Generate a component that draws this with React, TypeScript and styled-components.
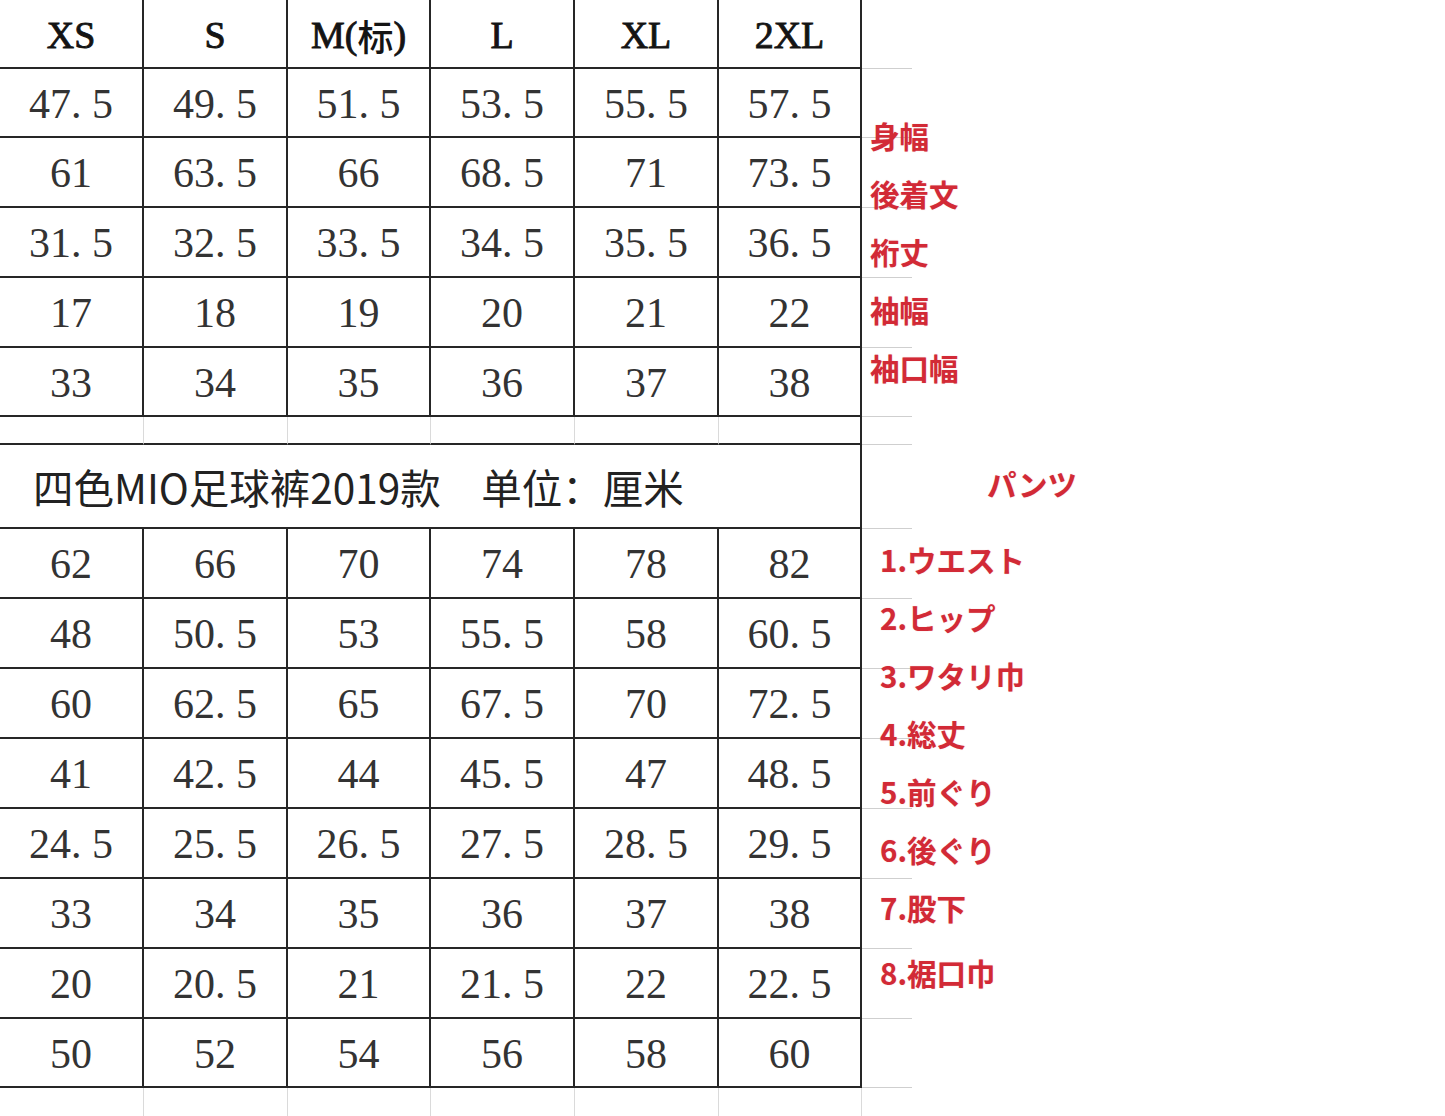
import styled, { createGlobalStyle } from 'styled-components';

const GlobalStyle = createGlobalStyle`
  html, body {
    margin: 0;
    padding: 0;
    background: #ffffff;
    overflow: hidden;
  }
`;

const LINE = '#262626';
const GHOST = '#cfcfcf';
const COLUMNS = '144px 144px 143px 144px 144px 143px 50px';
const SERIF = `'Liberation Serif', 'DejaVu Serif', 'Times New Roman', serif`;

// table + notes share one grid cell so the red notes sit over the sheet
const Page = styled.div`
  display: grid;
  width: 1445px;
  height: 1116px;
  overflow: hidden;

  & > * {
    grid-area: 1 / 1;
  }
`;

const Sheet = styled.div`
  display: flex;
  flex-direction: column;
`;

const Row = styled.div<{ $h: number }>`
  display: grid;
  grid-template-columns: ${COLUMNS};
  height: ${(p) => p.$h}px;
`;

const Cell = styled.div<{ $head?: boolean }>`
  box-sizing: border-box;
  display: flex;
  align-items: center;
  justify-content: center;
  border-right: 2px solid ${LINE};
  border-bottom: 2px solid ${LINE};
  font-family: ${SERIF};
  font-size: ${(p) => (p.$head ? '38px' : '42px')};
  font-weight: 400;
  -webkit-text-stroke: ${(p) => (p.$head ? '0.9px #141414' : '0')};
  color: ${(p) => (p.$head ? '#141414' : '#333333')};
  padding-top: 2px;
  white-space: nowrap;
`;

const HeadCjk = styled.span`
  font-family: 'Noto Sans CJK SC', sans-serif;
  font-weight: 500;
  -webkit-text-stroke: 0;
  font-size: 36px;
`;

const BlankCell = styled.div<{ $edge?: boolean; $open?: boolean }>`
  box-sizing: border-box;
  border-right: ${(p) => (p.$edge && !p.$open ? `2px solid ${LINE}` : `1px solid #dadada`)};
  border-bottom: ${(p) => (p.$open ? 'none' : `2px solid ${LINE}`)};
`;

const TitleCell = styled.div`
  grid-column: 1 / 7;
  box-sizing: border-box;
  display: flex;
  align-items: center;
  padding-left: 33px;
  border-right: 2px solid ${LINE};
  border-bottom: 2px solid ${LINE};
  font-family: 'Noto Sans CJK SC', sans-serif;
  font-size: 40.5px;
  font-weight: 400;
  color: #222222;
  white-space: pre;
`;

const GhostCell = styled.div<{ $open?: boolean }>`
  box-sizing: border-box;
  border-bottom: ${(p) => (p.$open ? 'none' : `1px solid ${GHOST}`)};
  margin-bottom: ${(p) => (p.$open ? 0 : 0.5)}px;
`;

const Notes = styled.div`
  display: flex;
  flex-direction: column;
  padding-top: 106px;
  font-family: 'Noto Sans CJK JP', 'Noto Sans', sans-serif;
  font-weight: 700;
  font-size: 29.5px;
  color: #d22a36;
`;

const NoteGroup = styled.div<{ $left: number; $top?: number }>`
  display: flex;
  flex-direction: column;
  padding-left: ${(p) => p.$left}px;
  margin-top: ${(p) => p.$top ?? 0}px;
`;

const Note = styled.div<{ $shift?: number }>`
  line-height: 58px;
  height: 58px;
  margin-top: ${(p) => p.$shift ?? 0}px;
  text-shadow: 0 0 1px rgba(210, 42, 54, 0.35);
  white-space: nowrap;
`;

const sizes = ['XS', 'S', 'M(标)', 'L', 'XL', '2XL'];

const topRows: number[][] = [
  [47.5, 49.5, 51.5, 53.5, 55.5, 57.5],
  [61, 63.5, 66, 68.5, 71, 73.5],
  [31.5, 32.5, 33.5, 34.5, 35.5, 36.5],
  [17, 18, 19, 20, 21, 22],
  [33, 34, 35, 36, 37, 38],
];
const topHeights = [69, 70, 70, 70, 69];

const bottomRows: number[][] = [
  [62, 66, 70, 74, 78, 82],
  [48, 50.5, 53, 55.5, 58, 60.5],
  [60, 62.5, 65, 67.5, 70, 72.5],
  [41, 42.5, 44, 45.5, 47, 48.5],
  [24.5, 25.5, 26.5, 27.5, 28.5, 29.5],
  [33, 34, 35, 36, 37, 38],
  [20, 20.5, 21, 21.5, 22, 22.5],
  [50, 52, 54, 56, 58, 60],
];
const bottomHeights = [70, 70, 70, 70, 70, 70, 70, 69];

const topNotes = ['身幅', '後着文', '裄丈', '袖幅', '袖口幅'];
const pantsNotes = ['1.ウエスト', '2.ヒップ', '3.ワタリ巾', '4.総丈', '5.前ぐり', '6.後ぐり', '7.股下', '8.裾口巾'];

const fmt = (n: number) => String(n).replace('.', '. ');

const HeadLabel = ({ text }: { text: string }) => {
  const m = text.match(/^(.*\()(.+)(\))$/);
  if (!m) return <>{text}</>;
  return (
    <>
      {m[1]}
      <HeadCjk>{m[2]}</HeadCjk>
      {m[3]}
    </>
  );
};

const DataRow = ({ values, h }: { values: number[]; h: number }) => (
  <Row $h={h}>
    {values.map((v, i) => (
      <Cell key={i}>{fmt(v)}</Cell>
    ))}
    <GhostCell />
  </Row>
);

const SpacerRow = ({ h, open }: { h: number; open?: boolean }) => (
  <Row $h={h}>
    {sizes.map((_, i) => (
      <BlankCell key={i} $edge={i === 5} $open={open} />
    ))}
    <GhostCell $open={open} />
  </Row>
);

export default function App() {
  return (
    <>
      <GlobalStyle />
      <Page>
        <Sheet>
          <Row $h={69}>
            {sizes.map((s) => (
              <Cell key={s} $head>
                <HeadLabel text={s} />
              </Cell>
            ))}
            <GhostCell />
          </Row>
          {topRows.map((r, i) => (
            <DataRow key={i} values={r} h={topHeights[i]} />
          ))}
          <SpacerRow h={28} />
          <Row $h={84}>
            <TitleCell>{'四色MIO足球裤2019款　单位：厘米'}</TitleCell>
            <GhostCell />
          </Row>
          {bottomRows.map((r, i) => (
            <DataRow key={i} values={r} h={bottomHeights[i]} />
          ))}
          <SpacerRow h={40} open />
        </Sheet>

        <Notes>
          <NoteGroup $left={870}>
            {topNotes.map((n) => (
              <Note key={n}>{n}</Note>
            ))}
          </NoteGroup>
          <NoteGroup $left={987} $top={58}>
            <Note>パンツ</Note>
          </NoteGroup>
          <NoteGroup $left={880} $top={18}>
            {pantsNotes.map((n, i) => (
              <Note key={n} $shift={i === 7 ? 7 : 0}>
                {n}
              </Note>
            ))}
          </NoteGroup>
        </Notes>
      </Page>
    </>
  );
}
